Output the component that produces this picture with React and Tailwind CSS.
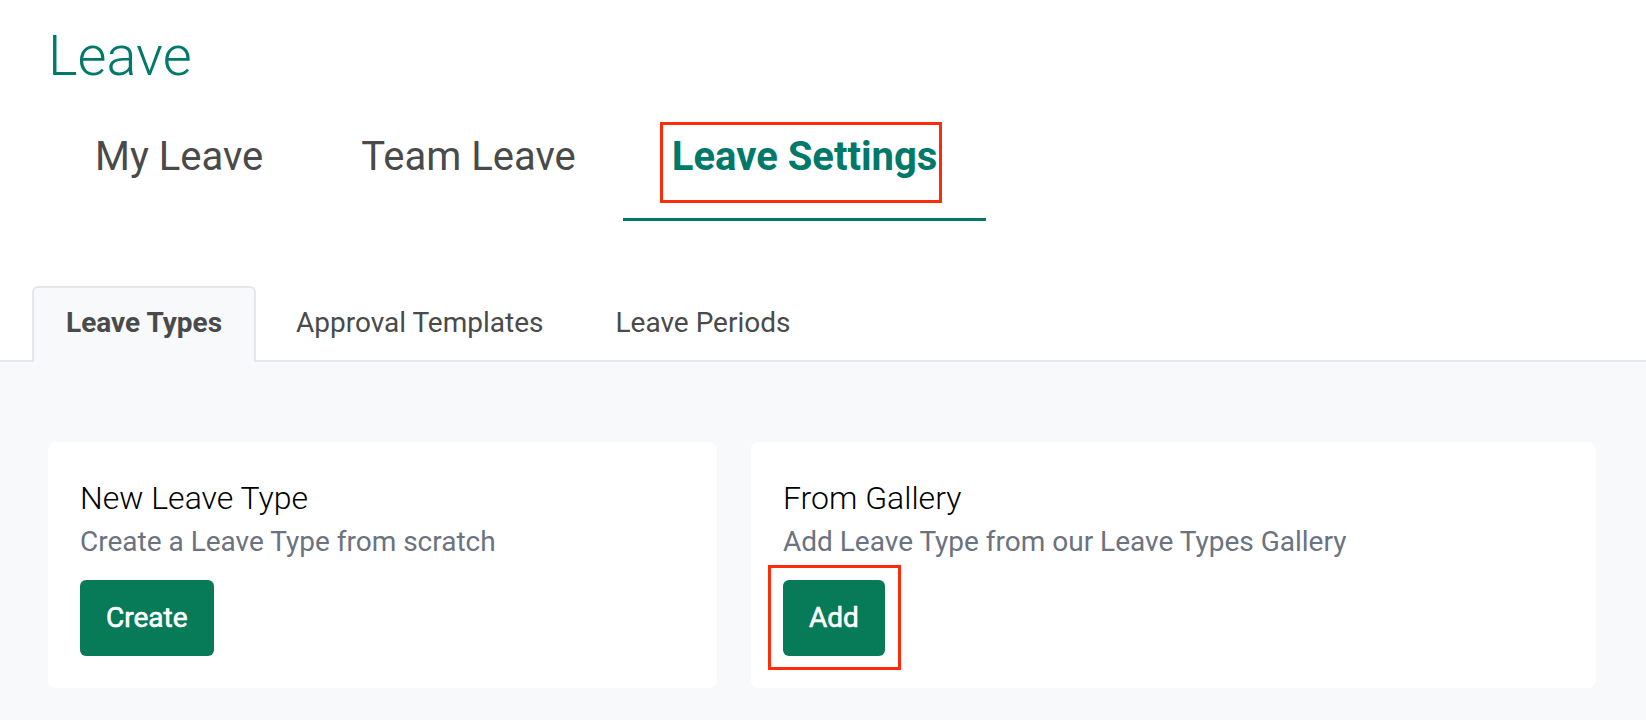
export default function App() {
  const font = { fontFamily: "Roboto, 'Liberation Sans', sans-serif" };
  return (
    <div className="w-[1646px] h-[720px] bg-white overflow-hidden" style={font}>
      <div className="font-['Roboto',sans-serif]">
        <h1 className="pl-12 pt-[24px] text-[56px] leading-[64px] font-light text-[#00796b]">Leave</h1>

        <nav className="mt-[45px] pl-[46px] flex items-start">
          <div className="px-[49px] pb-[37px] border-b-[3px] border-transparent text-[40px] leading-[48px] text-[#4a4a4a]">My Leave</div>
          <div className="pl-[49px] pr-[47px] pb-[37px] border-b-[3px] border-transparent text-[40px] leading-[48px] text-[#4a4a4a]">Team Leave</div>
          <div className="px-[49px] pb-[37px] border-b-[3px] border-[#00796b] text-[40px] leading-[48px] font-bold text-[#00796b]">
            <span className="relative inline-block">
              Leave Settings
              <span className="absolute left-[-12px] right-[-5px] top-[-11px] bottom-[-22px] border-[3px] border-[#fd2d0c]"></span>
            </span>
          </div>
        </nav>

        <div className="mt-[65px] pl-[32px] flex items-end border-b-2 border-[#e6e7ea]">
          <div className="-mb-[2px] mr-[4px] px-[32px] pt-[18px] pb-[22px] border-2 border-b-0 border-[#e6e7ea] rounded-t-md bg-[#f8f9fa] text-[28px] leading-[34px] font-bold text-[#4a4a4a]">
            Leave Types
          </div>
          <div className="px-[36px] pt-[20px] pb-[20px] text-[28px] leading-[34px] text-[#4a4a4a]">Approval Templates</div>
          <div className="px-[36px] pt-[20px] pb-[20px] text-[28px] leading-[34px] text-[#4a4a4a]">Leave Periods</div>
        </div>

        <div className="bg-[#f8f9fa] pl-12 pr-[50px] pt-[80px] pb-[40px] flex gap-[34px]">
          <div className="w-[669px] bg-white rounded-lg px-8 pt-[37px] pb-8">
            <div className="text-[32px] leading-[38px] font-light text-black">New Leave Type</div>
            <div className="text-[28px] leading-[50px] text-[#6b7280]">Create a Leave Type from scratch</div>
            <div className="mt-[13px] flex">
              <button className="h-[76px] px-[26px] rounded-md bg-[#077a58] text-white text-[28px] font-normal [-webkit-text-stroke:0.6px_#ffffff]">Create</button>
            </div>
          </div>
          <div className="flex-1 bg-white rounded-lg px-8 pt-[37px] pb-8">
            <div className="text-[32px] leading-[38px] font-light text-black">From Gallery</div>
            <div className="text-[28px] leading-[50px] text-[#6b7280]">Add Leave Type from our Leave Types Gallery</div>
            <div className="mt-[13px] flex">
              <div className="relative">
                <button className="h-[76px] px-[26px] rounded-md bg-[#077a58] text-white text-[28px] font-normal [-webkit-text-stroke:0.6px_#ffffff]">Add</button>
                <span className="absolute left-[-15px] right-[-16px] top-[-15px] bottom-[-14px] border-[3px] border-[#fd2d0c]"></span>
              </div>
            </div>
          </div>
        </div>
      </div>
    </div>
  );
}
